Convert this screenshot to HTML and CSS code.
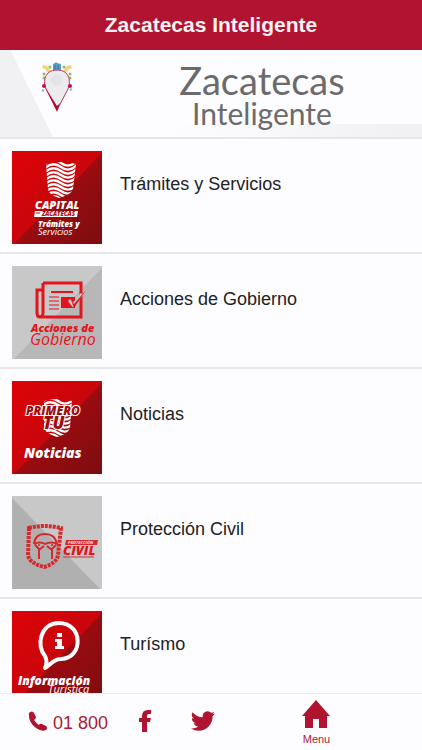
FILE: index.html
```html
<!DOCTYPE html>
<html lang="es">
<head>
<meta charset="utf-8">
<meta name="viewport" content="width=device-width, initial-scale=1">
<title>Zacatecas Inteligente</title>
<link rel="stylesheet" href="styles.css">
</head>
<body>
<svg class="defs" width="0" height="0" aria-hidden="true">
  <defs>
    <linearGradient id="red" x2="1" y2="1"><stop offset="0" stop-color="#dd0308"/><stop offset=".5" stop-color="#c9060b"/></linearGradient>
    <linearGradient id="dark" x2="1" y2="1"><stop offset=".4" stop-color="#a00b0f"/><stop offset="1" stop-color="#7c0d10"/></linearGradient>
    <clipPath id="shield-a"><path d="M34 13Q50 9 64 13L61 38Q59 44 47 47Q37 44 36 38z"/></clipPath>
    <clipPath id="shield-b"><path d="M32 20Q46 16 60 20L58 47Q56 53 45 56Q34 53 32 47z"/></clipPath>
    <path id="waves" d="M0 4q8-7 16-1t16-2M0 8q8-7 16-1t16-2M0 12q8-7 16-1t16-2M0 16q8-7 16-1t16-2M0 20q8-7 16-1t16-2M0 24q8-7 16-1t16-2M0 28q8-7 16-1t16-2M0 32q8-7 16-1t16-2M0 36q8-7 16-1t16-2M0 40q8-7 16-1t16-2" fill="none" stroke="#fff" stroke-width="2.300"/>
  </defs>
</svg>
<header class="topbar"><h1>Zacatecas Inteligente</h1></header>
<section class="banner">
  <svg class="pin" viewBox="0 0 34 52" aria-hidden="true">
    <path d="M3 4l4 1 4 5-3 2-3-4-3-1zM31 4l-4 1-4 5 3 2 3-4 3-1z" fill="#f2d47c"/>
    <path d="M13 3l2-1 1-1 1 1 4 1v7h-8z" fill="#5d9fc4"/>
    <path d="M15 4v4M18 4v4" stroke="#356f9c" stroke-width="1"/>
    <g fill="#8fbd62"><circle cx="10" cy="6" r="1.500"/><circle cx="24" cy="6" r="1.500"/><circle cx="4" cy="13" r="1.500"/><circle cx="30" cy="13" r="1.500"/><circle cx="4" cy="17" r="1.500"/><circle cx="30" cy="17" r="1.500"/></g>
    <path d="M2 29l2 1M30 29l2-1" stroke="#87b5cf" stroke-width="2"/>
    <path d="M17 49L6 28C3 21 4 9 17 9s14 12 11 19z" fill="#ececef" stroke="#b83656" stroke-width="1"/>
    <path d="M5 26l12 19 3-3-3 9z" fill="#b00c32"/>
    <circle cx="4" cy="25" r="2" fill="#c21443"/><circle cx="30" cy="25" r="2" fill="#c21443"/>
    <circle cx="17" cy="19" r="6" fill="#e4e4e7"/>
  </svg>
  <p class="brand"><span class="brand-main">Zacatecas</span><span class="brand-sub">Inteligente</span></p>
</section>
<main class="list">
  <a class="row" href="#tramites">
    <svg class="tile" viewBox="0 0 90 93" aria-hidden="true">
      <path fill="url(#red)" d="M0 0h90v93H0z"/><path fill="url(#dark)" d="M90 2v91H2z"/>
      <g clip-path="url(#shield-a)"><use href="#waves" x="33" y="9"/></g>
      <text class="t-heavy" x="23" y="58" font-size="11">CAPITAL</text>
      <path d="M23 60h43l-1 6H22z" fill="#fff"/>
      <text class="t-heavy t-ink" x="30" y="65" font-size="6">ZACATECAS</text>
      <path d="M24 62h4" stroke="#b5080d"/>
      <text class="t-heavy" x="26" y="76" font-size="8">Trámites y</text>
      <text class="t-light" x="26" y="84" font-size="9">Servicios</text>
    </svg>
    <span class="label">Trámites y Servicios</span>
  </a>
  <a class="row" href="#acciones">
    <svg class="tile" viewBox="0 0 90 93" aria-hidden="true">
      <path fill="#c9c8c9" d="M0 0h90v93H0z"/><path fill="#b8b7b8" d="M90 2v91H2z"/>
      <g fill="none" stroke="#e3151b" stroke-width="3">
        <path d="M31 17h38v34H28q-3 0-3-4V24h6M31 17v30q0 4-4 4"/>
        <path d="M39 26h22" stroke-width="2"/>
        <path d="M37 31h10M37 35h10M37 39h10M37 43h10" stroke-width="1"/>
      </g>
      <path d="M49 31h14v11H49z" fill="#e3151b"/>
      <path d="M57 34l4 5L70 28" fill="none" stroke="#c9c8c9" stroke-width="3"/>
      <path d="M59 34l3 4L74 24 62 42z" fill="#e3151b"/>
      <text class="t-heavy t-red" x="19" y="66" font-size="11">Acciones de</text>
      <text class="t-light t-red" x="18" y="79" font-size="16">Gobierno</text>
    </svg>
    <span class="label">Acciones de Gobierno</span>
  </a>
  <a class="row" href="#noticias">
    <svg class="tile" viewBox="0 0 90 93" aria-hidden="true">
      <path fill="url(#red)" d="M0 0h90v93H0z"/><path fill="url(#dark)" d="M90 2v91H2z"/>
      <g clip-path="url(#shield-b)"><use href="#waves" x="30" y="17"/></g>
      <text class="t-heavy t-outline" x="31" y="48" font-size="17">TU</text>
      <text class="t-heavy t-outline" x="14" y="34" font-size="12">PRIMERO</text>
      <text class="t-heavy" x="12" y="77" font-size="14">Noticias</text>
    </svg>
    <span class="label">Noticias</span>
  </a>
  <a class="row" href="#proteccion">
    <svg class="tile" viewBox="0 0 90 93" aria-hidden="true">
      <path fill="#c9c8c9" d="M0 0h90v93H0z"/><path fill="#b1b0b1" d="M0 2v91h88z"/>
      <g fill="none" stroke="#d42a2e">
        <path d="M17 32q15-4 32 0l-3 27q-1 8-14 12-15-4-16-12z" stroke-width="4" stroke-dasharray="3 1"/>
        <path d="M22 48q1-10 11-10t12 10q-5-3-12 0-5-3-11 0M27 63V53l-4-4M27 54l5-4M40 63V53l4-4M40 54l-5-4" stroke-width="2"/>
      </g>
      <circle cx="27" cy="49" r="1" fill="#d42a2e"/><circle cx="40" cy="49" r="1" fill="#d42a2e"/>
      <path d="M54 44h32l-1 5H53z" fill="#d42a2e"/>
      <text class="t-heavy t-pale" x="56" y="48" font-size="4">PROTECCIÓN</text>
      <text class="t-heavy t-red" x="51" y="59" font-size="13">CIVIL</text>
      <path d="M51 61h31" stroke="#d42a2e"/>
    </svg>
    <span class="label">Protección Civil</span>
  </a>
  <a class="row" href="#turismo">
    <svg class="tile" viewBox="0 0 90 93" aria-hidden="true">
      <path fill="url(#red)" d="M0 0h90v93H0z"/><path fill="url(#dark)" d="M90 2v91H2z"/>
      <path d="M33 45C24 35 28 12 47 12c24 0 25 35 2 36-5 0-7 2-16 9q3-6 0-12z" fill="none" stroke="#fff" stroke-width="4" stroke-linejoin="round"/>
      <path d="M45 22h5v4h-5zM43 28h7v7h2v3h-9v-3h2v-4h-2z" fill="#fff"/>
      <text class="t-heavy" x="6" y="74" font-size="12">Información</text>
      <text class="t-light" x="36" y="82" font-size="11">Turística</text>
    </svg>
    <span class="label">Turísmo</span>
  </a>
</main>
<nav class="tabbar">
  <a class="phone" href="tel:01800">
    <svg class="phone-icon" viewBox="0 0 20 20" aria-hidden="true"><path d="M1 2Q4-1 6 2l2 4q0 2-2 3 2 3 5 5 1-2 3-1l4 2q2 2 0 4-4 2-10-2Q0 11 1 2z"/></svg>
    <span>01 800</span>
  </a>
  <a class="social" href="#facebook" aria-label="Facebook">
    <svg viewBox="0 0 24 24" aria-hidden="true"><path d="M8 23V13H5V9h3V7q0-6 6-6h3v4h-2q-2 0-2 2v2h4l-1 4h-3v10z"/></svg>
  </a>
  <a class="social" href="#twitter" aria-label="Twitter">
    <svg viewBox="0 0 24 24" aria-hidden="true"><path d="M23.950 4.600a10 10 0 0 1-2.820.770 4.950 4.950 0 0 0 2.160-2.720 9.900 9.900 0 0 1-3.120 1.190 4.920 4.920 0 0 0-8.380 4.480A13.930 13.930 0 0 1 1.640 3.160a4.920 4.920 0 0 0 1.520 6.570 4.900 4.900 0 0 1-2.230-.610v.060a4.920 4.920 0 0 0 3.950 4.830 5 5 0 0 1-2.210.080 4.940 4.940 0 0 0 4.600 3.420A9.870 9.870 0 0 1 0 19.540a14 14 0 0 0 7.550 2.210c9.050 0 14-7.500 14-13.980 0-.210 0-.420-.020-.630a9.940 9.940 0 0 0 2.420-2.540z"/></svg>
  </a>
  <a class="menu" href="#menu">
    <svg viewBox="0 0 28 28" aria-hidden="true"><path d="M14 0l14 16h-3v12h-8v-9h-6v9H3V16H0z"/></svg>
    <span>Menu</span>
  </a>
</nav>
</body>
</html>
```
FILE: styles.css
```css
* { box-sizing: border-box; }

body {
  margin: 0;
  height: 100vh;
  display: flex;
  flex-direction: column;
  overflow: hidden;
  background: #fdfcfe;
  color: #222224;
  font-family: "Liberation Sans", Arial, sans-serif;
}

a { color: inherit; text-decoration: none; }
svg { display: block; }
.defs { position: absolute; }

.topbar {
  flex: none;
  height: 50px;
  display: flex;
  align-items: center;
  justify-content: center;
  background: #b01430;
  color: #fff0f2;
}
.topbar h1 { margin: 0; font-size: 21px; line-height: 26px; font-weight: 700; }

.banner {
  flex: none;
  height: 89px;
  display: grid;
  grid-template-columns: 27% 1fr;
  border-bottom: 2px solid #e6e5e8;
  background:
    linear-gradient(90deg, #fdfcfe, #f0f0f3) right bottom / 60% 13px no-repeat,
    linear-gradient(64deg, #f1f1f4 47px, #fdfcfe 48px);
}
.pin { width: 34px; height: 52px; margin: 11px 0 0 40px; }
.brand {
  margin: 0;
  padding-top: 12px;
  justify-self: center;
  margin-right: 12px;
  text-align: center;
  color: #6b6a6c;
  font-family: Lato, sans-serif;
}
.brand-main, .brand-sub { display: block; }
.brand-main { font-size: 38px; line-height: 36px; }
.brand-sub { font-size: 30px; line-height: 30px; }

.list { flex: 1; min-height: 0; overflow: hidden; }
.row {
  display: flex;
  gap: 18px;
  height: 115px;
  padding: 12px 12px 0;
  border-bottom: 2px solid #e8e7ea;
}
.tile { flex: none; width: 90px; height: 93px; }
.label { padding-top: 22px; font-size: 18px; line-height: 22px; }

.t-heavy, .t-light { fill: #fff; font-family: "Open Sans", sans-serif; font-style: italic; }
.t-heavy { font-weight: 800; }
.t-light { font-weight: 400; }
.t-red { fill: #e3151b; }
.t-ink { fill: #b5080d; }
.t-pale { fill: #d8d5d6; }
.t-outline { fill: #a00b10; stroke: #fff; stroke-width: 2px; paint-order: stroke; }

.tabbar {
  flex: none;
  height: 57px;
  display: grid;
  grid-template-columns: 28% 13% 14% 40%;
  border-top: 1px solid #ecebee;
  color: #a81c38;
}
.tabbar svg { fill: #b01430; }
.phone { display: flex; gap: 5px; padding: 17px 0 0 28px; font-size: 18px; line-height: 24px; white-space: nowrap; }
.phone-icon { width: 20px; height: 20px; }
.social { justify-self: center; padding-top: 15px; }
.social svg { width: 24px; height: 24px; }
.menu { justify-self: center; display: grid; justify-items: center; align-content: start; padding-top: 6px; gap: 4px; font-size: 11px; line-height: 14px; }
.menu svg { width: 28px; height: 28px; }
```
